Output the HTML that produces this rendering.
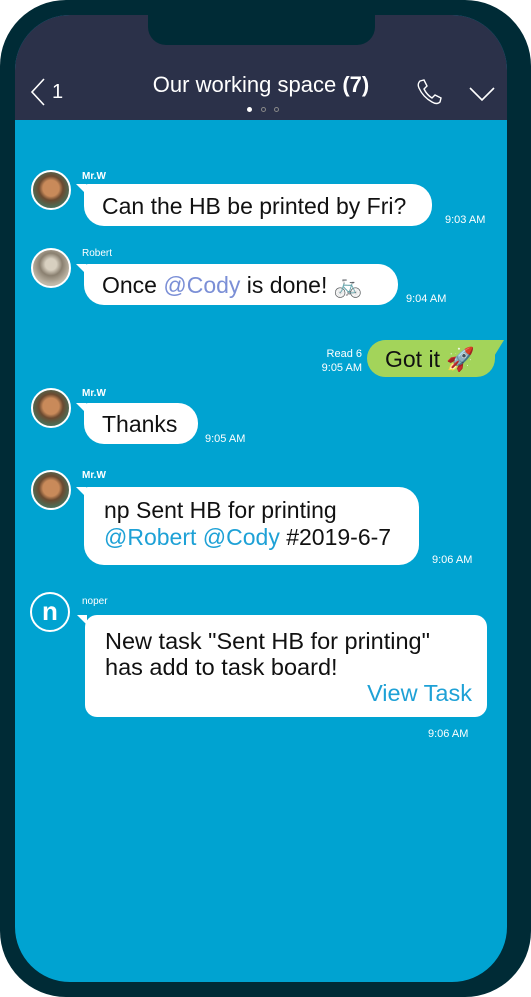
<!DOCTYPE html>
<html><head><meta charset="utf-8"><style>
*{margin:0;padding:0;box-sizing:border-box}
body{width:531px;height:997px;background:#fff;font-family:"Liberation Sans",sans-serif;position:relative;overflow:hidden}
.frame{position:absolute;left:0;top:0;width:531px;height:997px;background:#002b36;border-radius:66px}
.screen{position:absolute;left:15px;top:15px;width:492px;height:967px;background:#00a3d1;border-radius:55px;overflow:hidden}
.hdr{position:absolute;left:0;top:0;width:492px;height:105px;background:#2b3149}
.notch{position:absolute;left:133px;top:0;width:227px;height:30px;background:#002b36;border-radius:0 0 18px 18px}
.abs{position:absolute}
.title{left:0;width:492px;top:57px;text-align:center;color:#fff;font-size:22px}
.dot{position:absolute;top:92px;width:5px;height:5px;border-radius:50%}
.av{position:absolute;width:40px;height:40px;border-radius:50%;border:2px solid #fff;background:radial-gradient(circle at 50% 45%,#c98a5a 0 30%,#6b4a30 45%,#4d6b55 70%);overflow:hidden}
.name{position:absolute;color:#fff;font-size:10px;font-weight:bold}
.b{position:absolute;background:#fff;border-radius:20px;border-top-left-radius:4px;color:#111;font-size:23px}
.b::before{content:"";position:absolute;left:-8px;top:0;border-top:10px solid #fff;border-left:10px solid transparent}
.t{position:absolute;color:#fff;font-size:11px}
.m{color:#1ea1d6}
</style></head><body>
<div class="frame"></div>
<div class="screen">
 <div class="hdr">
  <div class="notch"></div>
  <svg class="abs" style="left:14px;top:63px" width="40" height="30"><path d="M15 1 L3 14 L15 27" stroke="#fff" stroke-width="1.6" fill="none"/></svg>
  <div class="abs" style="left:37px;top:66px;color:#fff;font-size:20px">1</div>
  <div class="abs title">Our working space <b>(7)</b></div>
  <div class="dot" style="left:232px;background:#fff"></div>
  <div class="dot" style="left:246px;border:1px solid #888"></div>
  <div class="dot" style="left:259px;border:1px solid #888"></div>
  <svg class="abs" style="left:400px;top:63px" width="28" height="28" viewBox="0 0 28 28"><path d="M5 3 L9 2 L12 8 L9 11 Q12 17 17 20 L20 17 L26 20 L25 24 Q22 27 17 24 Q8 19 4 10 Q2 6 5 3Z" stroke="#fff" stroke-width="1.4" fill="none"/></svg>
  <svg class="abs" style="left:453px;top:70px" width="30" height="20"><path d="M2 3 L14 15 L26 3" stroke="#fff" stroke-width="1.6" fill="none"/></svg>
 </div>
 <div class="av" style="left:16px;top:155px"></div>
 <div class="name" style="left:67px;top:156px">Mr.W</div>
 <div class="b" style="left:69px;top:169px;width:348px;height:42px;padding:9px 0 0 18px">Can the HB be printed by Fri?</div>
 <div class="t" style="left:430px;top:199px">9:03 AM</div>

 <div class="av" style="left:16px;top:233px;background:radial-gradient(circle at 50% 40%,#d8d0c0 0 20%,#8a8070 40%,#c0b8a8 70%)"></div>
 <div class="name" style="left:67px;top:233px;font-weight:normal">Robert</div>
 <div class="b" style="left:69px;top:249px;width:314px;height:41px;padding:8px 0 0 18px">Once <span style="color:#7b8fd6">@Cody</span> is done! 🚲</div>
 <div class="t" style="left:391px;top:278px">9:04 AM</div>

 <div class="t" style="left:290px;top:332px;width:57px;text-align:right;line-height:14px">Read 6<br>9:05 AM</div>
 <div class="abs" style="left:352px;top:325px;width:128px;height:37px;background:#a3d45a;border-radius:19px;border-top-right-radius:4px;font-size:23px;color:#111;padding:6px 0 0 18px">Got it 🚀</div>
 <svg class="abs" style="left:470px;top:325px" width="20" height="20"><path d="M0 0 L19 0 L8 18 L0 18Z" fill="#a3d45a"/></svg>

 <div class="av" style="left:16px;top:373px"></div>
 <div class="name" style="left:67px;top:373px">Mr.W</div>
 <div class="b" style="left:69px;top:388px;width:114px;height:41px;padding:8px 0 0 18px">Thanks</div>
 <div class="t" style="left:190px;top:418px">9:05 AM</div>

 <div class="av" style="left:16px;top:455px"></div>
 <div class="name" style="left:67px;top:455px">Mr.W</div>
 <div class="b" style="left:69px;top:472px;width:335px;height:78px;padding:10px 0 0 20px;line-height:27px">np Sent HB for printing<br><span class="m">@Robert @Cody</span> #2019-6-7</div>
 <div class="t" style="left:417px;top:539px">9:06 AM</div>

 <div class="abs" style="left:15px;top:577px;width:40px;height:40px;border-radius:50%;border:2px solid #fff;color:#fff;font-weight:bold;font-size:26px;text-align:center;line-height:34px">n</div>
 <div class="name" style="left:67px;top:581px;font-weight:normal">noper</div>
 <div class="b" style="left:70px;top:600px;width:402px;height:102px;padding:13px 0 0 20px;line-height:26px;border-radius:12px;font-size:23.5px">New task "Sent HB for printing"<br>has add to task board!<div style="text-align:right;padding-right:15px;color:#1ea1d6">View Task</div></div>
 <div class="t" style="left:413px;top:713px">9:06 AM</div>
</div>
</body></html>
